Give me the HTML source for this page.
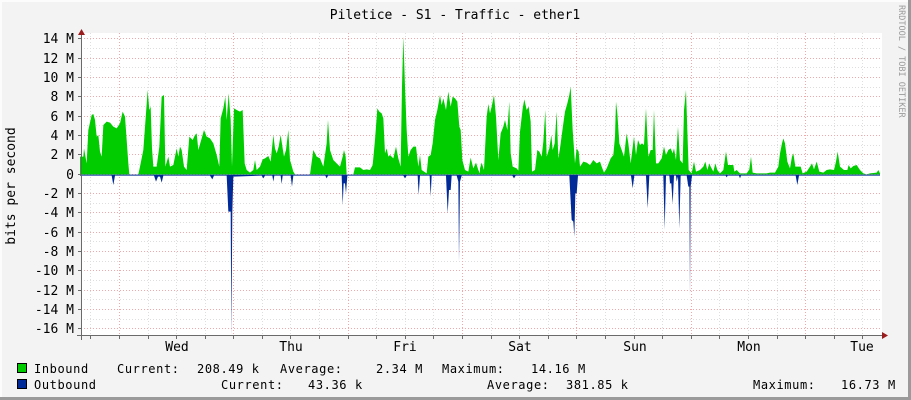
<!DOCTYPE html>
<html><head><meta charset="utf-8"><style>
html,body{margin:0;padding:0}
body{width:911px;height:400px;overflow:hidden;background:#f3f3f3;font-family:"DejaVu Sans Mono","Liberation Mono",monospace}
</style></head><body>
<svg width="911" height="400" xmlns="http://www.w3.org/2000/svg" style="position:absolute;left:0;top:0" font-family="DejaVu Sans Mono, Liberation Mono, monospace">
<rect x="0" y="0" width="911" height="400" fill="#f3f3f3"/>
<rect x="0" y="0" width="911" height="2" fill="#fcfcfc"/>
<rect x="0" y="0" width="2" height="400" fill="#fcfcfc"/>
<rect x="0" y="397" width="911" height="3" fill="#9a9a9a"/>
<rect x="908" y="0" width="3" height="400" fill="#9a9a9a"/>
<rect x="81" y="33" width="801" height="303" fill="#ffffff"/>
<g stroke-dasharray="1,2" stroke-width="1">
<g stroke="#dedede">
<path d="M81,48.5H882M81,67.5H882M81,87.5H882M81,106.5H882M81,125.5H882M81,145.5H882M81,164.5H882M81,183.5H882M81,203.5H882M81,222.5H882M81,241.5H882M81,261.5H882M81,280.5H882M81,299.5H882M81,319.5H882"/>
<path d="M90.5,33V336M148.5,33V336M176.5,33V336M205.5,33V336M262.5,33V336M290.5,33V336M319.5,33V336M376.5,33V336M405.5,33V336M433.5,33V336M491.5,33V336M519.5,33V336M548.5,33V336M605.5,33V336M634.5,33V336M662.5,33V336M719.5,33V336M748.5,33V336M777.5,33V336M834.5,33V336M862.5,33V336"/>
</g>
<g stroke="#f0a8a8">
<path d="M81,38.5H882M81,58.5H882M81,77.5H882M81,96.5H882M81,116.5H882M81,135.5H882M81,154.5H882M81,174.5H882M81,193.5H882M81,212.5H882M81,232.5H882M81,251.5H882M81,270.5H882M81,290.5H882M81,309.5H882M81,328.5H882"/>
<path d="M119.5,33V336M233.5,33V336M348.5,33V336M462.5,33V336M576.5,33V336M691.5,33V336M805.5,33V336"/>
</g>
</g>
<g transform="translate(80,30) scale(0.33333)">
<path fill="#00cc00" d="M0,433 L0,380 L10,380 L12,355 L20,400 L25,300 L35,255 L40,252 L45,270 L50,320 L55,315 L60,365 L65,380 L70,285 L80,275 L90,278 L100,290 L110,295 L120,280 L128,245 L135,260 L140,330 L145,400 L148,433 L175,433 L180,410 L190,360 L198,250 L203,180 L208,240 L212,230 L216,355 L220,410 L230,410 L238,350 L245,200 L252,195 L256,410 L265,380 L270,410 L280,405 L290,355 L295,380 L300,350 L305,360 L312,410 L320,420 L328,320 L338,330 L345,315 L350,310 L355,360 L365,325 L372,300 L380,320 L390,325 L400,340 L410,375 L418,410 L422,265 L430,235 L436,200 L440,270 L446,190 L452,270 L456,410 L462,235 L470,240 L480,245 L488,240 L494,400 L500,420 L510,428 L520,420 L525,390 L530,420 L540,410 L548,388 L555,385 L565,378 L572,395 L580,315 L585,355 L590,370 L596,350 L602,315 L608,355 L612,380 L618,360 L625,300 L630,390 L640,425 L645,433 L690,433 L700,360 L710,380 L720,385 L730,410 L740,340 L744,270 L750,360 L760,390 L770,400 L780,410 L788,380 L792,360 L797,380 L800,433 L820,433 L825,412 L840,412 L850,420 L860,418 L870,420 L878,405 L885,330 L892,235 L898,245 L905,250 L910,265 L915,370 L920,355 L925,380 L930,375 L940,385 L948,350 L955,385 L962,410 L966,170 L970,20 L975,170 L980,300 L985,380 L992,360 L1000,350 L1008,350 L1015,410 L1020,375 L1025,420 L1040,430 L1045,380 L1052,375 L1058,340 L1065,270 L1072,240 L1080,195 L1085,225 L1090,205 L1098,240 L1105,185 L1112,230 L1118,200 L1125,205 L1132,215 L1138,290 L1142,300 L1147,390 L1155,420 L1165,425 L1172,383 L1180,415 L1188,398 L1195,420 L1200,430 L1200,433 Z"/>
<path fill="#002a97" d="M0,434 L0,437 L95,437 L100,465 L105,437 L222,437 L228,455 L234,440 L240,440 L245,458 L250,437 L390,437 L397,448 L402,437 L440,437 L445,545 L452,545 L454,917 L457,545 L460,440 L545,437 L550,445 L555,437 L577,437 L580,455 L583,437 L602,437 L605,462 L608,437 L632,437 L636,470 L640,437 L736,437 L740,445 L744,437 L785,437 L788,525 L791,460 L795,460 L798,490 L802,437 L970,437 L975,445 L980,437 L1013,437 L1016,495 L1020,437 L1049,437 L1052,500 L1055,437 L1098,437 L1103,550 L1107,480 L1112,480 L1115,437 L1130,437 L1135,455 L1137,695 L1140,455 L1145,437 L1200,437 L1200,434 Z"/>
</g>
<g transform="translate(480,30) scale(0.33333)">
<path fill="#00cc00" d="M0,433 L0,415 L5,398 L12,420 L20,260 L25,222 L30,250 L35,230 L42,195 L48,260 L55,390 L62,310 L70,290 L75,270 L82,300 L88,215 L92,370 L98,410 L110,415 L115,422 L120,305 L128,235 L133,208 L140,240 L146,230 L152,275 L156,425 L165,420 L172,360 L178,365 L185,380 L190,335 L196,240 L200,380 L208,355 L214,315 L218,360 L224,340 L230,245 L235,385 L240,355 L248,295 L255,245 L262,220 L268,195 L272,170 L278,300 L285,400 L290,355 L296,365 L300,410 L310,395 L320,398 L330,405 L340,390 L350,400 L360,395 L365,410 L372,428 L380,415 L392,385 L400,375 L405,320 L408,215 L412,250 L418,340 L425,360 L432,380 L440,310 L445,340 L452,400 L462,320 L468,375 L474,330 L480,345 L486,340 L492,345 L498,235 L505,380 L512,360 L518,360 L522,240 L528,400 L535,400 L545,385 L552,350 L558,375 L565,360 L572,355 L578,370 L582,355 L588,390 L594,290 L600,390 L608,400 L612,240 L618,180 L622,300 L626,420 L635,430 L642,395 L648,425 L660,420 L670,410 L676,395 L682,420 L688,400 L692,410 L700,425 L706,400 L712,420 L720,430 L730,420 L738,365 L744,405 L752,405 L760,405 L763,425 L770,420 L780,430 L800,430 L808,418 L813,380 L818,428 L830,430 L860,430 L870,428 L885,428 L895,410 L900,370 L906,340 L910,325 L915,340 L922,395 L930,415 L936,380 L940,370 L946,410 L955,410 L962,410 L968,430 L980,425 L990,410 L996,400 L1002,418 L1010,395 L1018,425 L1030,428 L1040,420 L1050,418 L1062,420 L1068,395 L1073,365 L1080,410 L1092,420 L1102,420 L1106,405 L1112,415 L1120,408 L1130,405 L1140,420 L1150,430 L1160,433 L1170,430 L1190,428 L1195,420 L1200,430 L1200,433 Z"/>
<path fill="#002a97" d="M0,434 L0,437 L97,437 L102,445 L107,437 L268,437 L275,570 L280,575 L283,620 L286,490 L290,490 L294,437 L453,437 L458,475 L463,437 L498,437 L503,535 L508,437 L550,437 L554,598 L558,437 L568,437 L570,460 L574,460 L578,522 L582,437 L588,437 L590,455 L594,440 L598,595 L602,437 L620,437 L625,470 L628,470 L630,795 L632,470 L636,437 L737,437 L740,442 L743,437 L777,437 L780,445 L783,437 L947,437 L952,465 L957,437 L1200,437 L1200,434 Z"/>
</g>
<g stroke="#6a6a6a" stroke-width="1">
<path d="M81.5,33V340"/>
<path d="M77,335.5H883"/>
<path d="M90.5,336V339M119.5,336V339M148.5,336V339M176.5,336V339M205.5,336V339M233.5,336V339M262.5,336V339M290.5,336V339M319.5,336V339M348.5,336V339M376.5,336V339M405.5,336V339M433.5,336V339M462.5,336V339M491.5,336V339M519.5,336V339M548.5,336V339M576.5,336V339M605.5,336V339M634.5,336V339M662.5,336V339M691.5,336V339M719.5,336V339M748.5,336V339M777.5,336V339M805.5,336V339M834.5,336V339M862.5,336V339"/>
<path d="M78,38.5H81M78,58.5H81M78,77.5H81M78,96.5H81M78,116.5H81M78,135.5H81M78,154.5H81M78,174.5H81M78,193.5H81M78,212.5H81M78,232.5H81M78,251.5H81M78,270.5H81M78,290.5H81M78,309.5H81M78,328.5H81"/>
</g>
<path d="M78,35 L81.5,29 L85,35 Z" fill="#9b1c1c"/>
<path d="M882,332 L888,335.5 L882,339 Z" fill="#9b1c1c"/>
<g font-size="13" fill="#000" text-anchor="end">
<text x="74" y="43">14 M</text><text x="74" y="63">12 M</text><text x="74" y="82">10 M</text><text x="74" y="101">8 M</text><text x="74" y="121">6 M</text><text x="74" y="140">4 M</text><text x="74" y="159">2 M</text><text x="74" y="179">0</text><text x="74" y="198">-2 M</text><text x="74" y="217">-4 M</text><text x="74" y="237">-6 M</text><text x="74" y="256">-8 M</text><text x="74" y="275">-10 M</text><text x="74" y="295">-12 M</text><text x="74" y="314">-14 M</text><text x="74" y="333">-16 M</text>
</g>
<g font-size="13" fill="#000" text-anchor="middle">
<text x="177" y="351">Wed</text><text x="291" y="351">Thu</text><text x="405" y="351">Fri</text><text x="520" y="351">Sat</text><text x="635" y="351">Sun</text><text x="749" y="351">Mon</text><text x="862" y="351">Tue</text>
</g>
<text x="455" y="19" font-size="13" text-anchor="middle" fill="#000">Piletice - S1 - Traffic - ether1</text>
<text transform="translate(15,186) rotate(-90)" font-size="13" text-anchor="middle" fill="#000">bits per second</text>
<text transform="translate(899,5) rotate(90)" font-size="8.5" fill="#9a9a9a">RRDTOOL / TOBI OETIKER</text>
<rect x="17.5" y="363.5" width="9" height="9" fill="#00cc00" stroke="#000"/>
<rect x="17.5" y="379.5" width="9" height="9" fill="#002a97" stroke="#000"/>
<g font-size="12" letter-spacing="0.6" fill="#000" xml:space="preserve">
<text x="34" y="373">Inbound</text><text x="117" y="373">Current:</text><text x="197" y="373">208.49 k</text><text x="280" y="373">Average:</text><text x="376" y="373">2.34 M</text><text x="442" y="373">Maximum:</text><text x="531" y="373">14.16 M</text>
<text x="34" y="389">Outbound</text><text x="221" y="389">Current:</text><text x="308" y="389">43.36 k</text><text x="487" y="389">Average:</text><text x="566" y="389">381.85 k</text><text x="753" y="389">Maximum:</text><text x="841" y="389">16.73 M</text>
</g>
</svg>
</body></html>
